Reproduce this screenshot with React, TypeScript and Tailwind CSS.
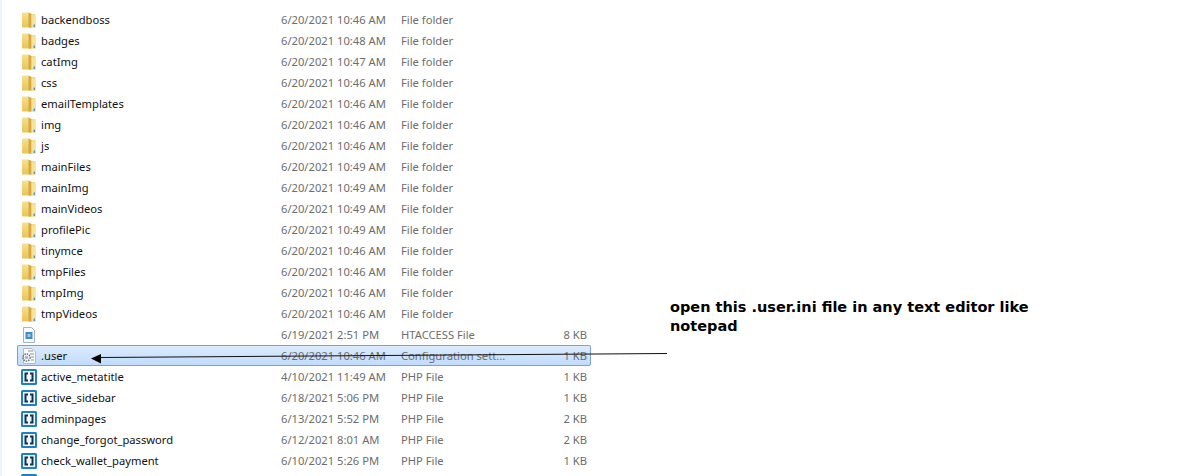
const FolderIcon = () => (
  <svg width="16" height="18" viewBox="0 0 16 18" className="shrink-0">
    <defs>
      <linearGradient id="folderFront" x1="0" y1="0" x2="0" y2="1">
        <stop offset="0" stopColor="#f7e08e" />
        <stop offset="1" stopColor="#eac357" />
      </linearGradient>
    </defs>
    <path d="M1 2.5 Q1 1.5 2 1.5 L8 1.5 L9 3 L14.5 3 L14.5 16.5 L1 16.5 Z" fill="url(#folderFront)" />
    <path d="M7.5 1.5 L10.5 3 L10.5 16.5 L7.5 16.5 Z" fill="#d5a93f" />
    <path d="M10.5 4 L14.5 5 L14.5 16.5 L10.5 16.5 Z" fill="#f7e39c" />
    <rect x="12.5" y="13.5" width="1.5" height="2.5" fill="#4f9fcb" />
  </svg>
);

const PhpIcon = () => (
  <svg width="16" height="16" viewBox="0 0 16 16" className="shrink-0">
    <rect x="0" y="0" width="16" height="16" rx="1.5" fill="#1f7fc0" />
    <rect x="2" y="2" width="12" height="12" fill="#f0f5f9" />
    <path d="M7 4.5 H4.5 V11.5 H7 M9 4.5 H11.5 V11.5 H9" fill="none" stroke="#0e3350" strokeWidth="2" />
  </svg>
);

const HtaccessIcon = () => (
  <svg width="16" height="16" viewBox="0 0 16 16" className="shrink-0">
    <path d="M2.5 .5 H10.5 L13.5 3.5 V15.5 H2.5 Z" fill="#f8fafc" stroke="#a9b3bd" />
    <rect x="4.5" y="5" width="7" height="7" fill="#3f8fc4" />
    <rect x="6.5" y="7" width="3" height="3" fill="#9cc6e2" />
  </svg>
);

const ConfigIcon = () => (
  <svg width="16" height="16" viewBox="0 0 16 16" className="shrink-0">
    <path d="M2.5 .5 H11 L14.5 4 V15.5 H2.5 Z" fill="#f7f8f9" stroke="#b4bac0" />
    <path d="M7 3 H12 M9 6 H13 M10 9 H13 M10 12 H13" stroke="#8f979e" />
    <circle cx="5.5" cy="9.5" r="3.6" fill="none" stroke="#5f6973" strokeWidth="1.4" strokeDasharray="1.4 1" />
    <circle cx="5.5" cy="9.5" r="1.8" fill="#aeb6bd" />
  </svg>
);

type Row = { name: string; date: string; type: string; size?: string; icon: "folder" | "php" | "ht" | "cfg"; selected?: boolean };

const folder = (name: string, date: string): Row => ({ name, date, type: "File folder", icon: "folder" });
const php = (name: string, date: string, size: string): Row => ({ name, date, type: "PHP File", size, icon: "php" });

const rows: Row[] = [
  folder("backendboss", "6/20/2021 10:46 AM"),
  folder("badges", "6/20/2021 10:48 AM"),
  folder("catImg", "6/20/2021 10:47 AM"),
  folder("css", "6/20/2021 10:46 AM"),
  folder("emailTemplates", "6/20/2021 10:46 AM"),
  folder("img", "6/20/2021 10:46 AM"),
  folder("js", "6/20/2021 10:46 AM"),
  folder("mainFiles", "6/20/2021 10:49 AM"),
  folder("mainImg", "6/20/2021 10:49 AM"),
  folder("mainVideos", "6/20/2021 10:49 AM"),
  folder("profilePic", "6/20/2021 10:49 AM"),
  folder("tinymce", "6/20/2021 10:46 AM"),
  folder("tmpFiles", "6/20/2021 10:46 AM"),
  folder("tmpImg", "6/20/2021 10:46 AM"),
  folder("tmpVideos", "6/20/2021 10:46 AM"),
  { name: "", date: "6/19/2021 2:51 PM", type: "HTACCESS File", size: "8 KB", icon: "ht" },
  { name: ".user", date: "6/20/2021 10:46 AM", type: "Configuration sett...", size: "1 KB", icon: "cfg", selected: true },
  php("active_metatitle", "4/10/2021 11:49 AM", "1 KB"),
  php("active_sidebar", "6/18/2021 5:06 PM", "1 KB"),
  php("adminpages", "6/13/2021 5:52 PM", "2 KB"),
  php("change_forgot_password", "6/12/2021 8:01 AM", "2 KB"),
  php("check_wallet_payment", "6/10/2021 5:26 PM", "1 KB"),
  { name: "", date: "", type: "", icon: "php" },
];

const Icon = ({ kind }: { kind: Row["icon"] }) => {
  if (kind === "folder") return <FolderIcon />;
  if (kind === "php") return <PhpIcon />;
  if (kind === "ht") return <HtaccessIcon />;
  return <ConfigIcon />;
};

export default function App() {
  return (
    <div className="relative h-[476px] w-[1187px] overflow-hidden border-l-2 border-[#eef3fa] bg-white pl-[15px] pt-[9px] font-['Noto_Sans',sans-serif] text-[11.2px]">
      <div className="w-[574px]">
        {rows.map((row, i) => (
          <div
            key={i}
            className={`flex h-[21px] items-center rounded-[2px] border ${
              row.selected ? "border-[#7da2ce] bg-gradient-to-b from-[#dcebfc] to-[#c1dcfc]" : "border-transparent"
            }`}
          >
            <div className="flex w-[23px] pl-[3px]">
              <Icon kind={row.icon} />
            </div>
            <span className="w-[240px] pt-px text-[#111]">{row.name}</span>
            <span className="w-[120px] pt-px text-[#6d6d6d]">{row.date}</span>
            <span className="w-[150px] pt-px text-[#6d6d6d]">{row.type}</span>
            <span className="w-[36px] pt-px text-right text-[#6d6d6d]">{row.size}</span>
          </div>
        ))}
      </div>

      <svg className="absolute -left-[2px] top-0" width="1187" height="476">
        <line x1="667" y1="353.5" x2="100" y2="357.5" stroke="#111" strokeWidth="1" />
        <path d="M91 358.5 L101 354 L101 363.5 Z" fill="#000" />
      </svg>

      <p className="absolute left-[668px] top-[298px] w-[365px] font-['DejaVu_Sans',sans-serif] text-[14.5px] leading-[19px] font-bold text-black">
        open this .user.ini file in any text editor like notepad
      </p>
    </div>
  );
}
